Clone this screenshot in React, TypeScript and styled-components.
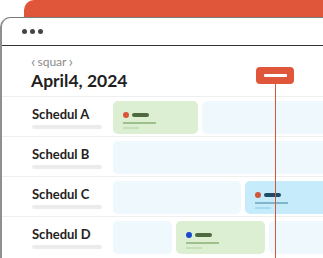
import styled, { createGlobalStyle } from 'styled-components';

const Global = createGlobalStyle`
  html, body {
    margin:0;
    padding:0;
    background:#ffffff;
    overflow:hidden;
  }
  body {
    font-family:"Lato", "Liberation Sans", sans-serif;
  }
`;

const Stage = styled.div`
  position:relative;
  width:323px;
  height:258px;
  overflow:hidden;
`;

const Backdrop = styled.div`
  position:absolute;
  left:24px;
  top:0;
  width:330px;
  height:40px;
  background:#e0563b;
  border-top-left-radius:10px;
`;

const Window = styled.div`
  position:relative;
  margin-top:17px;
  width:345px;
  height:260px;
  background:#ffffff;
  border-top:1px solid #7a7a7a;
  border-left:2px solid #8f8f8f;
  border-top-left-radius:10px;
`;

const TitleBar = styled.div`
  height:27px;
  display:flex;
  align-items:center;
  gap:3px;
  padding-left:20px;
  border-bottom:1px solid #333333;
`;

const Dot = styled.span`
  width:5px;
  height:5px;
  border-radius:50%;
  background:#444444;
`;

const Header = styled.div`
  height:50px;
  padding:9px 0 0 29px;
  box-sizing:border-box;
`;

const Crumb = styled.div`
  display:flex;
  align-items:center;
  gap:2px;
  font-size:12px;
  line-height:14px;
  color:#8a8a8a;
`;

const Chevron = styled.span`
  font-size:16px;
  line-height:14px;
  margin-top:-2px;
  color:#8f8f8f;
`;

const Title = styled.div`
  margin-top:1px;
  font-size:17.5px;
  line-height:22px;
  font-weight:700;
  color:#1f1f1f;
`;

const Row = styled.div`
  display:flex;
  height:40px;
  border-top:1px solid #efefef;
  box-sizing:border-box;
  padding:4px 0 2px;
`;

const Label = styled.div`
  width:111px;
  flex:none;
  display:flex;
  flex-direction:column;
  justify-content:center;
  gap:3px;
  padding:1px 0 0 30px;
  box-sizing:border-box;
`;

const LabelText = styled.div`
  font-size:13px;
  line-height:15px;
  font-weight:700;
  color:#222222;
`;

const LabelBar = styled.div`
  width:70px;
  height:4px;
  border-radius:2px;
  background:#ececec;
`;

const Cells = styled.div`
  flex:1;
  display:flex;
  gap:4px;
`;

const tones = {
  empty: '#eef8fd',
  green: '#dcefd2',
  blue: '#c6ebfb',
};

const Cell = styled.div<{ $w?: number; $tone: keyof typeof tones }>`
  ${p => (p.$w ? `width:${p.$w}px; flex:none;` : 'flex:1;')}
  background:${p => tones[p.$tone]};
  border-radius:5px;
  padding:11px 0 0 10px;
  box-sizing:border-box;
`;

const EventHead = styled.div`
  display:flex;
  align-items:center;
  gap:3px;
`;

const EventDot = styled.span<{ $c: string }>`
  width:6px;
  height:6px;
  border-radius:50%;
  background:${p => p.$c};
`;

const EventPill = styled.span<{ $c: string }>`
  width:17px;
  height:4px;
  border-radius:2px;
  background:${p => p.$c};
`;

const EventLine = styled.div<{ $w: number; $c: string }>`
  width:${p => p.$w}px;
  height:2px;
  margin-top:${p => (p.$w > 20 ? 4 : 3)}px;
  background:${p => p.$c};
`;

const Marker = styled.div`
  position:absolute;
  left:256px;
  top:67px;
  width:38px;
  height:17px;
  border-radius:4px;
  background:#e0563b;
  display:flex;
  align-items:center;
  justify-content:center;
`;

const MarkerBar = styled.span`
  width:23px;
  height:3px;
  border-radius:1px;
  background:#ffffff;
`;

const NowLine = styled.div`
  position:absolute;
  left:275px;
  top:84px;
  width:1px;
  height:180px;
  background:#d4553a;
`;

type Ev = { dot: string; pill: string; line: string; faint: string };

const greenEv = (dot: string): Ev => ({ dot, pill: '#4e6a3e', line: '#9fbf8c', faint: '#c5e0b6' });
const blueEv: Ev = { dot: '#d0553a', pill: '#1f4d68', line: '#7fb6cc', faint: '#a2dbf2' };

const Event = ({ ev }: { ev: Ev }) => (
  <>
    <EventHead>
      <EventDot $c={ev.dot} />
      <EventPill $c={ev.pill} />
    </EventHead>
    <EventLine $w={33} $c={ev.line} />
    <EventLine $w={16} $c={ev.faint} />
  </>
);

type CellDef = { w?: number; tone: keyof typeof tones; ev?: Ev };

const rows: { name: string; cells: CellDef[] }[] = [
  { name: 'Schedul A', cells: [{ w: 85, tone: 'green', ev: greenEv('#dc5538') }, { tone: 'empty' }] },
  { name: 'Schedul B', cells: [{ tone: 'empty' }] },
  { name: 'Schedul C', cells: [{ w: 128, tone: 'empty' }, { tone: 'blue', ev: blueEv }] },
  { name: 'Schedul D', cells: [{ w: 59, tone: 'empty' }, { w: 89, tone: 'green', ev: greenEv('#1b48d2') }, { tone: 'empty' }] },
];

export default function App() {
  return (
    <Stage>
      <Global />
      <Backdrop />
      <Window>
        <TitleBar>
          <Dot />
          <Dot />
          <Dot />
        </TitleBar>
        <Header>
          <Crumb>
            <Chevron>‹</Chevron>
            squar
            <Chevron>›</Chevron>
          </Crumb>
          <Title>April4, 2024</Title>
        </Header>
        {rows.map(r => (
          <Row key={r.name}>
            <Label>
              <LabelText>{r.name}</LabelText>
              <LabelBar />
            </Label>
            <Cells>
              {r.cells.map((c, i) => (
                <Cell key={i} $w={c.w} $tone={c.tone}>
                  {c.ev && <Event ev={c.ev} />}
                </Cell>
              ))}
            </Cells>
          </Row>
        ))}
      </Window>
      <Marker>
        <MarkerBar />
      </Marker>
      <NowLine />
    </Stage>
  );
}
